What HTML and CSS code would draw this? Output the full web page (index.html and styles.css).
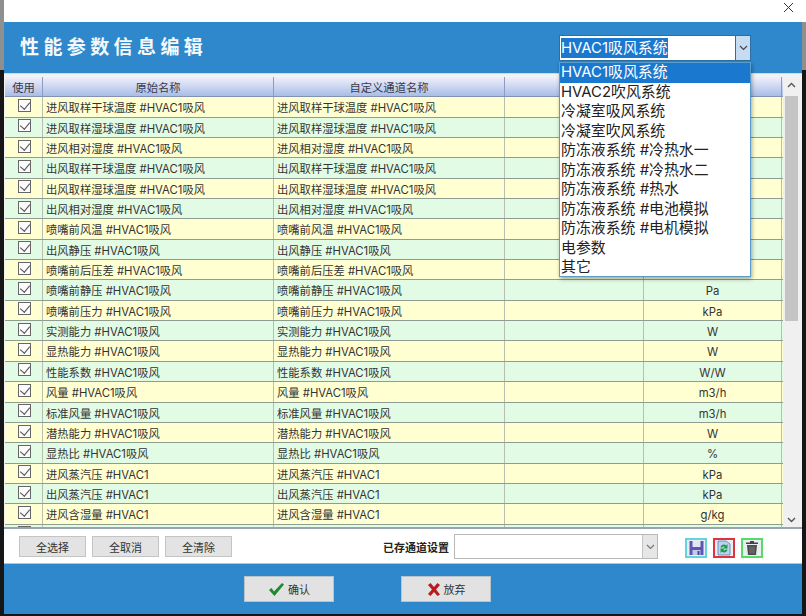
FILE: index.html
```html
<!DOCTYPE html>
<html lang="zh-CN">
<head>
    <meta charset="UTF-8">
    <meta name="viewport" content="width=device-width, initial-scale=1.0">
    <title>性能参数信息编辑</title>
    <link rel="stylesheet" href="styles.css">
</head>
<body>
    <div class="window">
        <div class="titlebar">
            <svg class="close-icon" width="11" height="11" viewBox="0 0 11 11"><path d="M1 1l9 9M10 1l-9 9" stroke="#333" stroke-width="1" fill="none"/></svg>
        </div>

        <div class="header">
            <h1>性能参数信息编辑</h1>
            <div class="system-select">
                <div class="select-box">
                    <span class="select-value"><span class="selected-text">HVAC1吸风系统</span></span>
                    <span class="select-arrow"><svg width="9" height="6" viewBox="0 0 9 6"><path d="M1 1l3.5 3.5L8 1" stroke="#445" stroke-width="1.2" fill="none"/></svg></span>
                </div>
                <ul class="select-menu">
                    <li class="active">HVAC1吸风系统</li>
                    <li>HVAC2吹风系统</li>
                    <li>冷凝室吸风系统</li>
                    <li>冷凝室吹风系统</li>
                    <li>防冻液系统 #冷热水一</li>
                    <li>防冻液系统 #冷热水二</li>
                    <li>防冻液系统 #热水</li>
                    <li>防冻液系统 #电池模拟</li>
                    <li>防冻液系统 #电机模拟</li>
                    <li>电参数</li>
                    <li>其它</li>
                </ul>
            </div>
        </div>

        <div class="table-panel">
            <div class="table-body">
                <div class="row head">
                    <span>使用</span><span>原始名称</span><span>自定义通道名称</span><span></span><span></span>
                </div>
                <div class="row yellow"><span class="use"><i class="check"></i></span><span class="name">进风取样干球温度 #HVAC1吸风</span><span class="name">进风取样干球温度 #HVAC1吸风</span><span></span><span></span></div>
                <div class="row green"><span class="use"><i class="check"></i></span><span class="name">进风取样湿球温度 #HVAC1吸风</span><span class="name">进风取样湿球温度 #HVAC1吸风</span><span></span><span></span></div>
                <div class="row yellow"><span class="use"><i class="check"></i></span><span class="name">进风相对湿度 #HVAC1吸风</span><span class="name">进风相对湿度 #HVAC1吸风</span><span></span><span></span></div>
                <div class="row green"><span class="use"><i class="check"></i></span><span class="name">出风取样干球温度 #HVAC1吸风</span><span class="name">出风取样干球温度 #HVAC1吸风</span><span></span><span></span></div>
                <div class="row yellow"><span class="use"><i class="check"></i></span><span class="name">出风取样湿球温度 #HVAC1吸风</span><span class="name">出风取样湿球温度 #HVAC1吸风</span><span></span><span></span></div>
                <div class="row green"><span class="use"><i class="check"></i></span><span class="name">出风相对湿度 #HVAC1吸风</span><span class="name">出风相对湿度 #HVAC1吸风</span><span></span><span></span></div>
                <div class="row yellow"><span class="use"><i class="check"></i></span><span class="name">喷嘴前风温 #HVAC1吸风</span><span class="name">喷嘴前风温 #HVAC1吸风</span><span></span><span></span></div>
                <div class="row green"><span class="use"><i class="check"></i></span><span class="name">出风静压 #HVAC1吸风</span><span class="name">出风静压 #HVAC1吸风</span><span></span><span></span></div>
                <div class="row yellow"><span class="use"><i class="check"></i></span><span class="name">喷嘴前后压差 #HVAC1吸风</span><span class="name">喷嘴前后压差 #HVAC1吸风</span><span></span><span></span></div>
                <div class="row green"><span class="use"><i class="check"></i></span><span class="name">喷嘴前静压 #HVAC1吸风</span><span class="name">喷嘴前静压 #HVAC1吸风</span><span></span><span>Pa</span></div>
                <div class="row yellow"><span class="use"><i class="check"></i></span><span class="name">喷嘴前压力 #HVAC1吸风</span><span class="name">喷嘴前压力 #HVAC1吸风</span><span></span><span>kPa</span></div>
                <div class="row green"><span class="use"><i class="check"></i></span><span class="name">实测能力 #HVAC1吸风</span><span class="name">实测能力 #HVAC1吸风</span><span></span><span>W</span></div>
                <div class="row yellow"><span class="use"><i class="check"></i></span><span class="name">显热能力 #HVAC1吸风</span><span class="name">显热能力 #HVAC1吸风</span><span></span><span>W</span></div>
                <div class="row green"><span class="use"><i class="check"></i></span><span class="name">性能系数 #HVAC1吸风</span><span class="name">性能系数 #HVAC1吸风</span><span></span><span>W/W</span></div>
                <div class="row yellow"><span class="use"><i class="check"></i></span><span class="name">风量 #HVAC1吸风</span><span class="name">风量 #HVAC1吸风</span><span></span><span>m3/h</span></div>
                <div class="row green"><span class="use"><i class="check"></i></span><span class="name">标准风量 #HVAC1吸风</span><span class="name">标准风量 #HVAC1吸风</span><span></span><span>m3/h</span></div>
                <div class="row yellow"><span class="use"><i class="check"></i></span><span class="name">潜热能力 #HVAC1吸风</span><span class="name">潜热能力 #HVAC1吸风</span><span></span><span>W</span></div>
                <div class="row green"><span class="use"><i class="check"></i></span><span class="name">显热比 #HVAC1吸风</span><span class="name">显热比 #HVAC1吸风</span><span></span><span>%</span></div>
                <div class="row yellow"><span class="use"><i class="check"></i></span><span class="name">进风蒸汽压 #HVAC1</span><span class="name">进风蒸汽压 #HVAC1</span><span></span><span>kPa</span></div>
                <div class="row green"><span class="use"><i class="check"></i></span><span class="name">出风蒸汽压 #HVAC1</span><span class="name">出风蒸汽压 #HVAC1</span><span></span><span>kPa</span></div>
                <div class="row yellow"><span class="use"><i class="check"></i></span><span class="name">进风含湿量 #HVAC1</span><span class="name">进风含湿量 #HVAC1</span><span></span><span>g/kg</span></div>
                <div class="row green"><span class="use"><i class="check"></i></span><span class="name"></span><span class="name"></span><span></span><span></span></div>
            </div>
            <div class="scrollbar">
                <svg width="9" height="6" viewBox="0 0 9 6"><path d="M1 5l3.5-3.5L8 5" stroke="#555" stroke-width="1.4" fill="none"/></svg>
                <div class="scroll-track"><div class="scroll-thumb"></div></div>
                <svg width="9" height="6" viewBox="0 0 9 6"><path d="M1 1l3.5 3.5L8 1" stroke="#555" stroke-width="1.4" fill="none"/></svg>
            </div>
        </div>

        <div class="toolbar">
            <div class="toolbar-buttons">
                <button class="btn-small">全选择</button>
                <button class="btn-small">全取消</button>
                <button class="btn-small">全清除</button>
            </div>
            <label class="saved-label">已存通道设置</label>
            <div class="saved-select">
                <span class="saved-value"></span>
                <span class="saved-arrow"><svg width="9" height="6" viewBox="0 0 9 6"><path d="M1 1l3.5 3.5L8 1" stroke="#777" stroke-width="1.2" fill="none"/></svg></span>
            </div>
            <div class="tool-icons">
                <span class="tool-icon cyan">
                    <svg width="17" height="16" viewBox="0 0 16 16"><path d="M1 1h14v14H1z" fill="#5d55b5"/><path d="M4 1h8v6H4z" fill="#e4e4f2"/><path d="M4 10h8v5H4z" fill="#c9c9e4"/><path d="M9 11h2v4H9z" fill="#4a4399"/></svg>
                </span>
                <span class="tool-icon red">
                    <svg width="14" height="16" viewBox="0 0 14 16"><path d="M1 1h8l4 3v11H1z" fill="#bcd3ee" stroke="#5580b0" stroke-width=".8"/><path d="M3.500 7.500a3.300 3.300 0 0 1 5.700-2L10.500 4v4.500H6.300l1.500-1.500a1.600 1.600 0 0 0-2.600.500z" fill="#1c9a46"/><path d="M10.500 9.500a3.300 3.300 0 0 1-5.700 2L3.500 13V8.500h4.200L6.200 10a1.600 1.600 0 0 0 2.600-.500z" fill="#1c9a46"/></svg>
                </span>
                <span class="tool-icon lime">
                    <svg width="14" height="16" viewBox="0 0 14 16"><path d="M5 1h4v1.500h4V4H1V2.500h4z" fill="#444"/><path d="M2 5h10l-1 10H3z" fill="#4a4a4a"/><path d="M5 6.500v7M7 6.500v7M9 6.500v7" stroke="#8c8c8c" stroke-width=".8"/></svg>
                </span>
            </div>
        </div>

        <div class="footer">
            <button class="btn-main">
                <svg width="17" height="15" viewBox="0 0 17 15"><path d="M1 8l2.500-2 2.500 3.500L14 1l2 1.500L6.500 14z" fill="#1d8a2c"/></svg>
                确认
            </button>
            <button class="btn-main">
                <svg width="14" height="15" viewBox="0 0 14 15"><path d="M1 3l2.500-2L7 5l3.500-4L13 3 9 7.500l4 5L10.500 14 7 10l-3.500 4L1 12l4-4.500z" fill="#b81c1a"/></svg>
                放弃
            </button>
        </div>
    </div>
</body>
</html>
```

FILE: styles.css
```css
* {
    box-sizing: border-box;
}
body {
    margin: 0;
    width: 806px;
    height: 616px;
    overflow: hidden;
    background: linear-gradient(#8f8f8f 0, #8f8f8f 70px, #161616 70px);
    font-family: Inter, "Noto Sans CJK SC", sans-serif;
    font-size: 11px;
    color: #333333;
}
.window {
    margin-left: 4px;
    width: 798px;
    height: 614px;
    display: flex;
    flex-direction: column;
    background-color: #ffffff;
}
.titlebar {
    height: 22px;
    flex: none;
    margin-right: -4px;
    background-color: #ffffff;
    display: flex;
    justify-content: flex-end;
    align-items: flex-start;
    padding: 2px 12px 0 0;
}
.header {
    height: 51px;
    flex: none;
    background-color: #2f88cb;
    display: flex;
    justify-content: space-between;
    padding: 13px 51px 0 16px;
}
.header h1 {
    margin: 0;
    font-size: 19px;
    line-height: 26px;
    letter-spacing: 4.4px;
    font-weight: bold;
    color: #f4f8fb;
}
.system-select {
    position: relative;
    width: 192px;
    font-size: 14.9px;
}
.select-box {
    display: flex;
    height: 26px;
    background-color: #ffffff;
    border: 1px solid #2a6fa8;
}
.select-value {
    flex: 1;
    padding: 2px 1px;
    line-height: 20px;
    color: #ffffff;
}
.selected-text {
    background-color: #1a78cf;
    display: inline-block;
    height: 20px;
}
.select-arrow {
    width: 15px;
    background-color: #c6dcf0;
    border-left: 1px solid #2a6fa8;
    display: flex;
    align-items: center;
    justify-content: center;
}
.select-menu {
    position: absolute;
    top: 27px;
    left: 0;
    right: 0;
    margin: 0;
    padding: 0;
    height: 215px;
    list-style: none;
    background-color: #ffffff;
    border: 1px solid #5a9ccc;
    box-shadow: 1px 2px 4px rgba(0, 0, 0, 0.35);
    z-index: 5;
}
.select-menu li {
    height: 19.5px;
    line-height: 19.5px;
    padding-left: 1px;
    color: #222222;
    white-space: nowrap;
}
.select-menu li.active {
    background-color: #1a78cf;
    color: #ffffff;
}
.table-panel {
    height: 456px;
    flex: none;
    display: flex;
    padding: 3px 1px 0 1px;
    background-color: #f2f2f2;
    border-top: 1px solid #d8d8d8;
    border-bottom: 2px solid #9aa4ac;
    overflow: hidden;
}
.table-body {
    width: 778px;
    flex: none;
}
.row {
    display: grid;
    grid-template-columns: 38px 231px 231px 139px 138px;
    height: 20.35px;
    font-size: 11.3px;
    line-height: 22px;
    text-align: center;
    border-bottom: 1px solid #8e9c92;
}
.row span {
    border-right: 1px solid #b9bfae;
    overflow: hidden;
    white-space: nowrap;
}
.row .name {
    text-align: left;
    padding-left: 3px;
}
.row.head {
    background: linear-gradient(#f0f0fb, #a9bde8);
    color: #3a3a4a;
    border-bottom: 1px solid #8392b0;
}
.row.head span {
    border-right: 1px solid #8c9bc0;
}
.row.yellow {
    background-color: #ffffd2;
}
.row.green {
    background-color: #e2fbe4;
}
.use {
    display: flex;
    justify-content: center;
    align-items: center;
    padding: 0 0 3px 1px;
}
.check {
    display: block;
    width: 13px;
    height: 13px;
    border: 1px solid #666666;
    background-color: #fbfbfb;
    position: relative;
}
.check::after {
    content: "";
    position: absolute;
    left: 3px;
    top: 0;
    width: 5px;
    height: 8px;
    border: solid #555555;
    border-width: 0 1.4px 1.4px 0;
    transform: rotate(40deg);
}
.scrollbar {
    width: 17px;
    flex: none;
    display: flex;
    flex-direction: column;
    align-items: center;
    padding-top: 5px;
    background-color: #f0f0f0;
    height: 449px;
}
.scroll-track {
    flex: 1;
    width: 100%;
    padding: 5px 2px;
}
.scroll-thumb {
    height: 225px;
    background-color: #c4c4c4;
}
.scrollbar svg {
    flex: none;
    margin-bottom: 3px;
}
.toolbar {
    height: 35px;
    flex: none;
    display: flex;
    align-items: center;
    background-color: #ffffff;
    border-bottom: 1px solid #b9c4cc;
    padding: 1px 0 0 15px;
}
.toolbar-buttons {
    display: flex;
    gap: 6px;
    width: 364px;
}
.btn-small {
    width: 67px;
    height: 21px;
    padding: 0;
    font: inherit;
    color: #333333;
    background-color: #e3e3e3;
    border: 1px solid #c4c4c4;
}
.saved-label {
    width: 71px;
    font-weight: bold;
    color: #222222;
}
.saved-select {
    width: 204px;
    height: 25px;
    display: flex;
    background-color: #ffffff;
    border: 1px solid #b8b8b8;
}
.saved-value {
    flex: 1;
}
.saved-arrow {
    width: 15px;
    background-color: #e6e6e6;
    border-left: 1px solid #c4c4c4;
    display: flex;
    align-items: center;
    justify-content: center;
}
.tool-icons {
    display: flex;
    gap: 6px;
    margin: 2px 0 0 27px;
}
.tool-icon {
    width: 22px;
    height: 20px;
    border: 2px solid;
    display: flex;
    align-items: center;
    justify-content: center;
    background-color: #e8eef2;
}
.tool-icon.cyan {
    border-color: #63d3dc;
}
.tool-icon.red {
    border-color: #e0333f;
}
.tool-icon.lime {
    border-color: #55dc66;
}
.footer {
    flex: 1;
    display: flex;
    justify-content: flex-start;
    gap: 67px;
    padding: 12px 0 0 240px;
    background-color: #2f88cb;
}
.btn-main {
    width: 90px;
    height: 26px;
    padding: 0;
    font: inherit;
    color: #333333;
    background-color: #e2e2e2;
    border: 1px solid #b8c4cc;
    display: flex;
    align-items: center;
    justify-content: center;
    gap: 3px;
}
```
